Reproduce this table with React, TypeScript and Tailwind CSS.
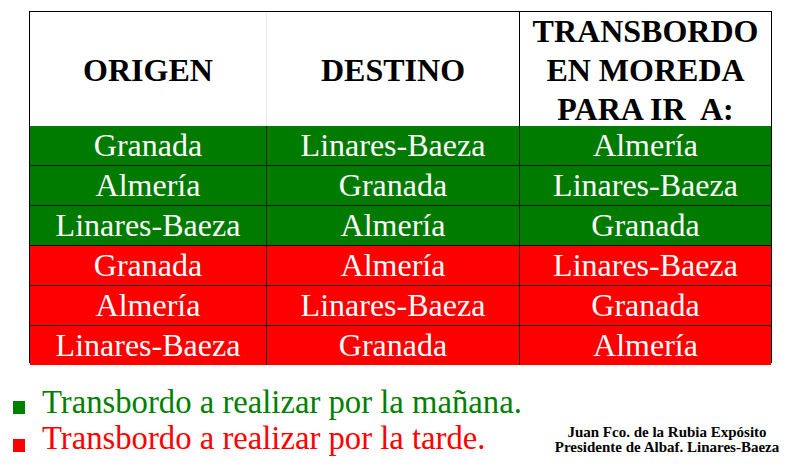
const rows: { tone: "green" | "red"; cells: [string, string, string] }[] = [
  { tone: "green", cells: ["Granada", "Linares-Baeza", "Almería"] },
  { tone: "green", cells: ["Almería", "Granada", "Linares-Baeza"] },
  { tone: "green", cells: ["Linares-Baeza", "Almería", "Granada"] },
  { tone: "red", cells: ["Granada", "Almería", "Linares-Baeza"] },
  { tone: "red", cells: ["Almería", "Linares-Baeza", "Granada"] },
  { tone: "red", cells: ["Linares-Baeza", "Granada", "Almería"] },
];

export default function App() {
  return (
    <div className="w-[800px] h-[470px] bg-white overflow-hidden font-[family-name:'Liberation_Serif',serif]">
      {/* Table */}
      <div className="ml-[29px] mt-[11px] w-[743px] border border-black">
        <div className="grid grid-cols-[237px_253px_1fr] h-[114px] bg-white text-black font-bold text-[32px]">
          <div className="flex items-center justify-center border-r border-[#ececec] leading-[39px]">ORIGEN</div>
          <div className="flex items-center justify-center border-r border-black leading-[39px]">DESTINO</div>
          <div className="flex flex-col items-center justify-center leading-[39px] text-center">
            <span>TRANSBORDO</span>
            <span>EN MOREDA</span>
            <span>PARA IR&nbsp; A:</span>
          </div>
        </div>
        <div className="flex flex-col h-[236px]">
          {rows.map((r, i) => (
            <div
              key={i}
              className={
                "flex-1 grid grid-cols-[237px_253px_1fr] text-white text-[32px] leading-[39px] " +
                (r.tone === "green" ? "bg-[#007b00] " : "bg-[#ff0000] ") +
                (i > 0 ? "border-t border-[#111]" : "")
              }
            >
              <div className="flex items-center justify-center border-r border-[#222]">{r.cells[0]}</div>
              <div className="flex items-center justify-center border-r border-[#222]">{r.cells[1]}</div>
              <div className="flex items-center justify-center">{r.cells[2]}</div>
            </div>
          ))}
        </div>
      </div>

      {/* Legend + signature */}
      <div className="flex mt-[21px]">
        <div className="ml-[13px] flex flex-col text-[32.7px] leading-[36px]">
          <div className="flex items-start">
            <span className="mt-[17px] w-[12px] h-[13px] bg-[#008000]" />
            <span className="ml-[17px] text-[#008000] whitespace-nowrap">Transbordo a realizar por la mañana.</span>
          </div>
          <div className="flex items-start">
            <span className="mt-[19px] w-[12px] h-[13px] bg-[#ff0000]" />
            <span className="ml-[17px] text-[#ff0000] whitespace-nowrap">Transbordo a realizar por la tarde.</span>
          </div>
        </div>
        <div className="ml-auto mr-[13px] mt-[41px] w-[240px] flex flex-col items-center text-black font-bold text-[15px] leading-[15px]">
          <span className="whitespace-nowrap">Juan Fco. de la Rubia Expósito</span>
          <span className="whitespace-nowrap">Presidente de Albaf. Linares-Baeza</span>
        </div>
      </div>
    </div>
  );
}
